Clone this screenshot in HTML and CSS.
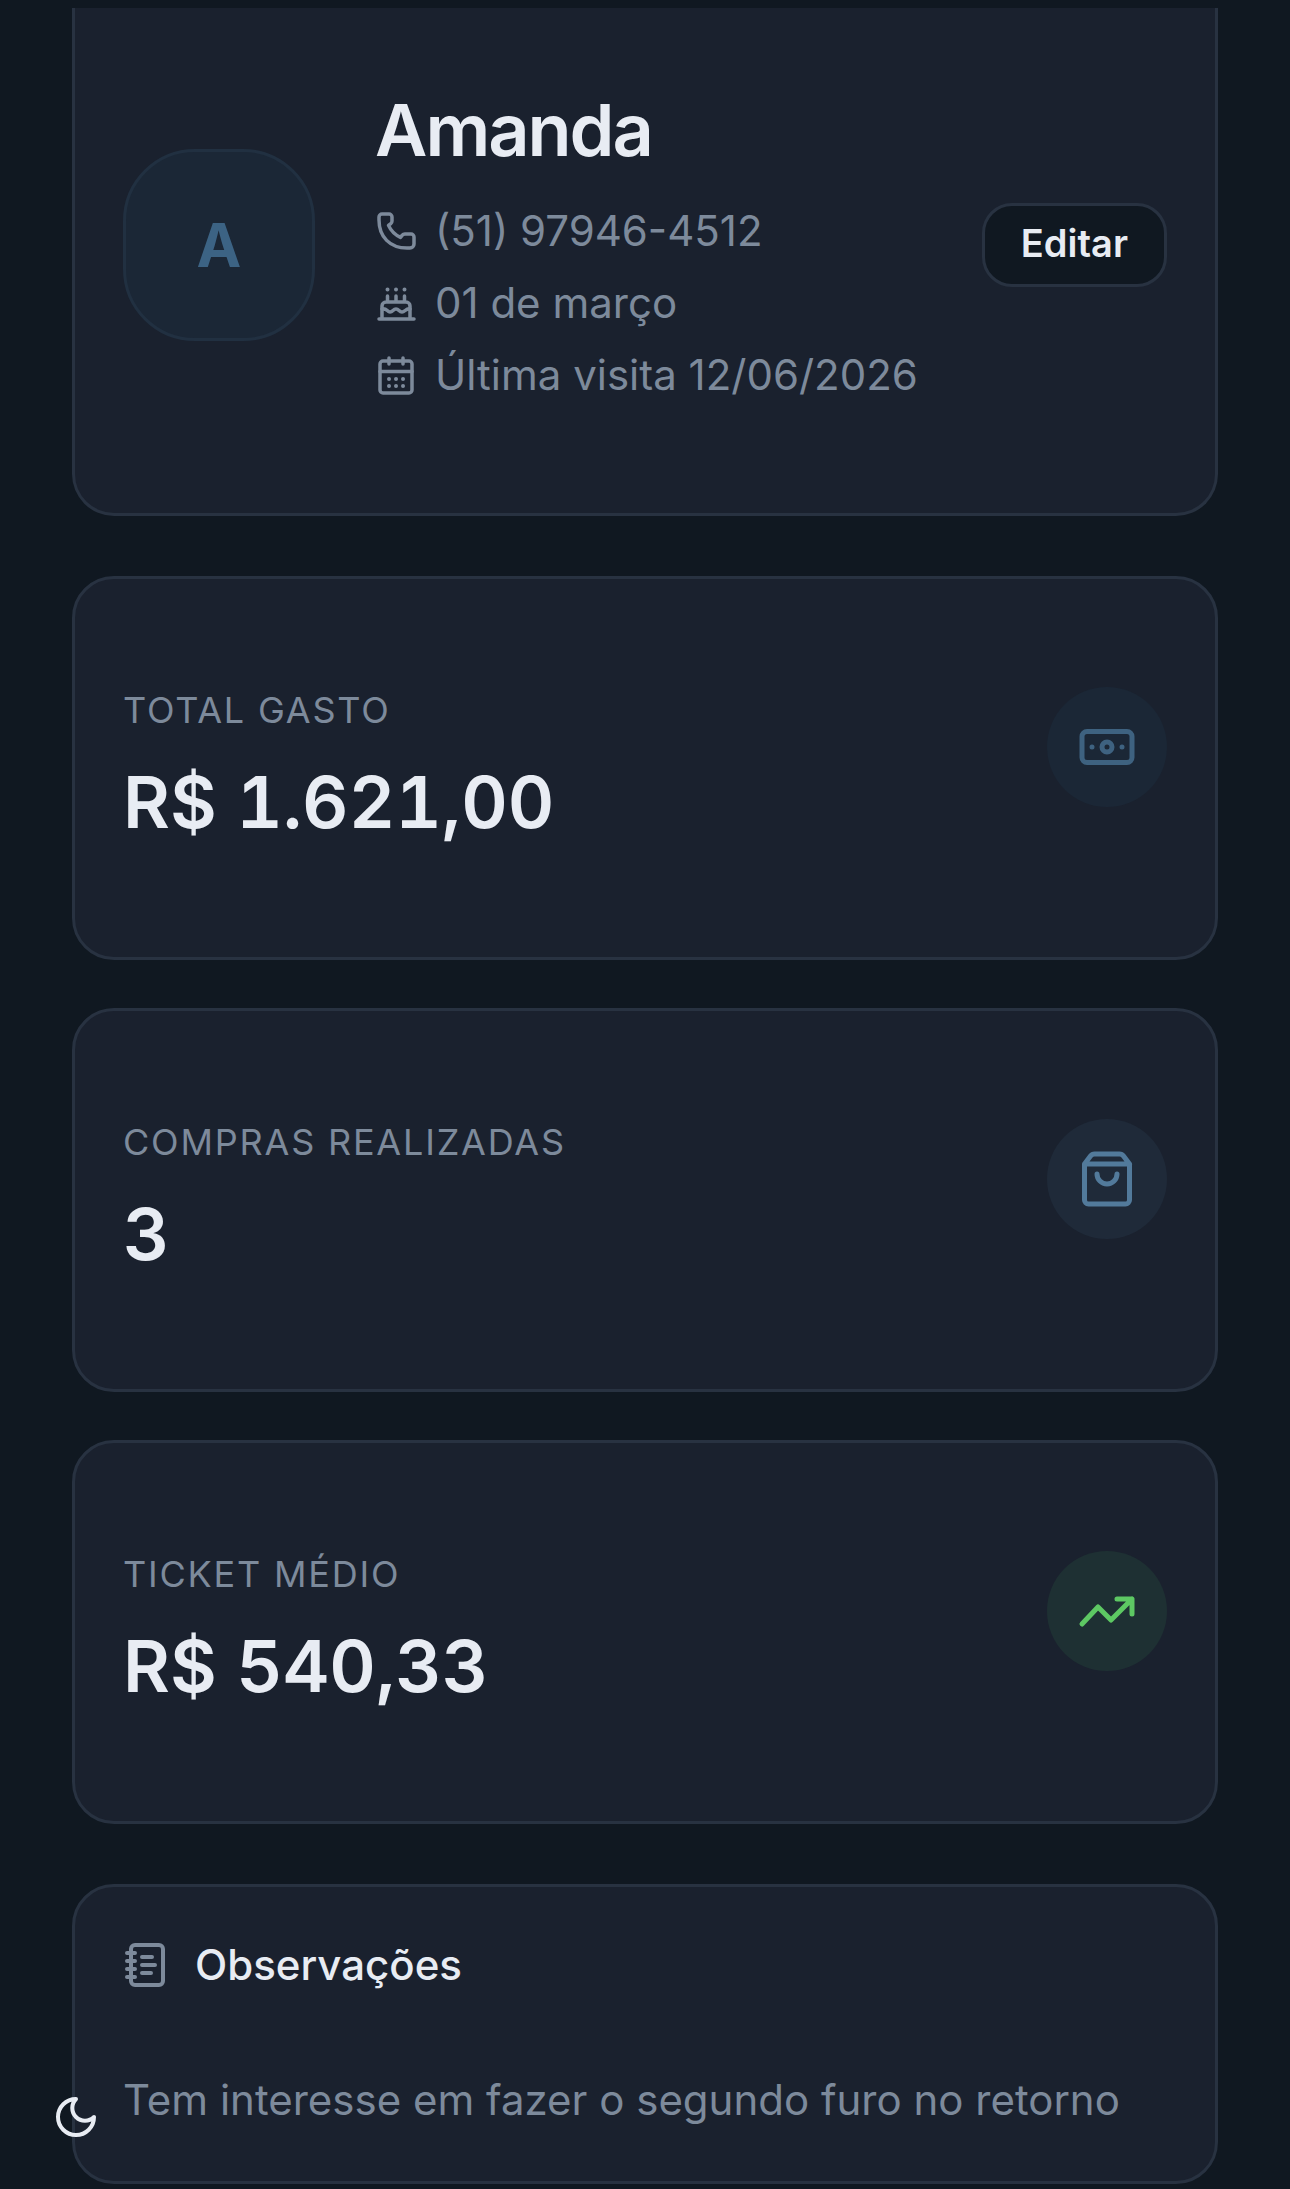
FILE: index.html
```html
<!DOCTYPE html>
<html lang="pt-BR">
<head>
  <meta charset="UTF-8" />
  <meta name="viewport" content="width=device-width, initial-scale=1.0"/>
  <title>Amanda – Cliente</title>
  <link rel="stylesheet" href="styles.css">
</head>

<body>
  <main class="page">
    <section class="card profile">
      <div class="avatar">A</div>
      <div class="profile-info">
        <h1>Amanda</h1>
        <ul class="details">
          <li>
            <svg class="icon" viewBox="0 0 42 42" stroke-width="3.500">
              <path d="M7 4h7a3 3 0 0 1 3 3v4c0 1-.4 2-1.200 2.600l-2.300 1.800c2.500 5.500 6.500 9.500 12 12l1.800-2.300c.6-.7 1.500-1.100 2.500-1.100H36a3 3 0 0 1 3 3v7a4 4 0 0 1-4 4h-3C15 38 4 27 4 10V7a3 3 0 0 1 3-3z"/>
            </svg>
            <span>(51) 97946-4512</span>
          </li>
          <li>
            <svg class="icon" viewBox="0 0 42 42" stroke-width="3.500">
              <path d="M4 37h35M7 37V24a4 4 0 0 1 4-4h20a4 4 0 0 1 4 4v13M12.500 14v6M21 14v6M29.500 14v6"/>
              <path d="M7 27c5-1 5 3 8 3s3-3 6-3 3 3 6 3 4-4 8-3"/>
              <path d="M12.500 7.500h.01M21 7.500h.01M29.500 7.500h.01" stroke-width="4"/>
            </svg>
            <span>01 de março</span>
          </li>
          <li>
            <svg class="icon" viewBox="0 0 42 42" stroke-width="3.500">
              <rect x="5" y="7" width="32" height="32" rx="3"/>
              <path d="M5 17.500h32M14 4v6M28 4v6"/>
              <path d="M14 25h.01M21 25h.01M28 25h.01M14 32h.01M21 32h.01M28 32h.01" stroke-width="4"/>
            </svg>
            <span>Última visita 12/06/2026</span>
          </li>
        </ul>
      </div>
      <button class="btn" type="button">Editar</button>
    </section>

    <section class="stats">
      <div class="card stat">
        <div>
          <p class="stat-label">TOTAL GASTO</p>
          <p class="stat-value">R$ 1.621,00</p>
        </div>
        <div class="badge badge-money">
          <svg viewBox="0 0 60 60" stroke-width="5">
            <rect x="5" y="14.500" width="50" height="31" rx="5"/>
            <circle cx="30" cy="30" r="5"/>
            <path d="M15 30h.01M45 30h.01"/>
          </svg>
        </div>
      </div>

      <div class="card stat">
        <div>
          <p class="stat-label">COMPRAS REALIZADAS</p>
          <p class="stat-value">3</p>
        </div>
        <div class="badge badge-bag">
          <svg viewBox="0 0 60 60" stroke-width="5">
            <path d="M7.500 15h45v36a4 4 0 0 1-4 4h-37a4 4 0 0 1-4-4V15l6-8a5 5 0 0 1 4-2h25a5 5 0 0 1 4 2l6 8"/>
            <path d="M20 25a10 10 0 0 0 20 0"/>
          </svg>
        </div>
      </div>

      <div class="card stat">
        <div>
          <p class="stat-label">TICKET MÉDIO</p>
          <p class="stat-value">R$ 540,33</p>
        </div>
        <div class="badge badge-ticket">
          <svg viewBox="0 0 60 60" stroke-width="5">
            <path d="M5 43l16-17 13 13 21-21M40 18h15v15"/>
          </svg>
        </div>
      </div>
    </section>

    <section class="card notes">
      <h2>
        <svg viewBox="0 0 48 48" stroke-width="4">
          <rect x="8" y="4" width="32" height="40" rx="4"/>
          <path d="M4 12h8M4 20h8M4 28h8M4 36h8M19 16h10M19 24h13M19 32h9"/>
        </svg>
        Observações
      </h2>
      <p>Tem interesse em fazer o segundo furo no retorno</p>
    </section>
  </main>

  <button class="theme-toggle" type="button" aria-label="Alternar tema">
    <svg viewBox="0 0 24 24" stroke-width="2">
      <path d="M12 3a6 6 0 0 0 9 9 9 9 0 1 1-9-9Z"/>
    </svg>
  </button>
</body>
</html>
```
FILE: styles.css
```css
/* Reset and base */
* { margin:0; padding:0; box-sizing:border-box; }
body {
  background:#101821; color:#e8ecf3;
  font-family:Inter, "Liberation Sans", sans-serif;
  font-size:42px; line-height:60px;
}
button { font-family:inherit; color:inherit; cursor:pointer; }
ul { list-style:none; }
svg {
  display:block; flex-shrink:0; fill:none; stroke:currentColor;
  stroke-linecap:round; stroke-linejoin:round;
}

.page { padding:8px 72px 4px; display:flex; flex-direction:column; gap:60px; }
.card {
  background:#1a212e; border:3px solid #283241;
  border-radius:42px; padding:48px;
}

/* Client header */
.profile {
  display:flex; align-items:center; gap:60px;
  padding-top:77px; padding-bottom:108px;
  border-top:none; border-top-left-radius:0; border-top-right-radius:0;
}
.avatar {
  width:192px; height:192px; flex-shrink:0;
  display:flex; align-items:center; justify-content:center;
  background:#1b2736; border:3px solid #213041; border-radius:72px;
  color:#3c6384; font-size:60px; font-weight:700;
}
.profile-info { flex:1; min-width:0; }
.profile h1 {
  font-size:72px; line-height:90px; font-weight:600;
  letter-spacing:-2px; margin-bottom:26px;
}
.details { display:flex; flex-direction:column; gap:12px; color:#7d8a9b; }
.details li { display:flex; align-items:center; gap:18px; }
.icon { width:42px; height:42px; }
.btn {
  height:84px; padding:0 36px 4px; flex-shrink:0;
  background:#101821; border:3px solid #283241; border-radius:30px;
  font-size:38px; font-weight:600;
}
.btn:hover { background:#1b2736; }

/* Stat cards */
.stats { display:flex; flex-direction:column; gap:48px; }
.stat {
  display:flex; align-items:flex-start; justify-content:space-between;
  padding-top:108px; padding-bottom:110px;
}
.stat-label {
  font-size:36px; line-height:46px; letter-spacing:.05em;
  color:#7d8a9b; margin-bottom:24px;
}
.stat-value {
  font-size:72px; line-height:90px; font-weight:600;
  font-variant-numeric:tabular-nums;
}
.badge {
  width:120px; height:120px; border-radius:50%;
  display:flex; align-items:center; justify-content:center;
}
.badge svg { width:60px; height:60px; }
.badge-money { background:#1b2736; color:#3e6280; }
.badge-bag { background:#1f2a39; color:#527a9b; }
.badge-ticket { background:#1e3033; color:#5dc863; }

/* Notes */
.notes h2 {
  display:flex; align-items:center; gap:24px;
  font-size:42px; font-weight:500; margin-bottom:72px;
}
.notes svg { width:48px; height:48px; color:#7d8a9b; }
.notes p { line-height:66px; color:#7d8a9b; }

.theme-toggle {
  position:fixed; left:52px; bottom:48px;
  background:none; border:none;
}
.theme-toggle svg { width:48px; height:48px; }
```
